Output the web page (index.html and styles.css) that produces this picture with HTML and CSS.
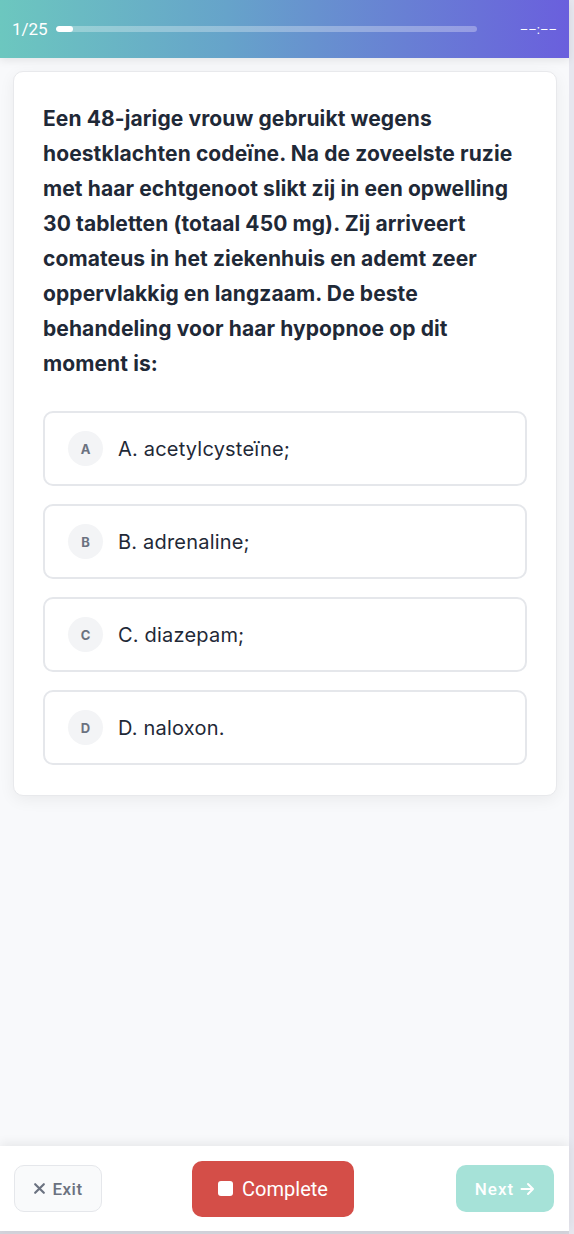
FILE: index.html
```html
<!DOCTYPE html>
<html lang="nl">
<head>
  <meta charset="UTF-8" />
  <meta name="viewport" content="width=device-width, initial-scale=1.0"/>
  <title>Quiz</title>
  <link rel="stylesheet" href="styles.css">
</head>
<body>

<div class="app">
  <header class="topbar">
    <span class="counter">1/25</span>
    <div class="progress"><div class="progress-fill" style="width: 4%"></div></div>
    <span class="timer">&ndash;&ndash;:&ndash;&ndash;</span>
  </header>

  <main class="content">
    <div class="card">
      <p class="question">Een 48-jarige vrouw gebruikt wegens hoestklachten codeïne. Na de zoveelste ruzie met haar echtgenoot slikt zij in een opwelling 30 tabletten (totaal 450 mg). Zij arriveert comateus in het ziekenhuis en ademt zeer oppervlakkig en langzaam. De beste behandeling voor haar hypopnoe op dit moment is:</p>

      <div class="options">
        <button class="option"><span class="letter">A</span><span class="option-text">A. acetylcysteïne;</span></button>
        <button class="option"><span class="letter">B</span><span class="option-text">B. adrenaline;</span></button>
        <button class="option"><span class="letter">C</span><span class="option-text">C. diazepam;</span></button>
        <button class="option"><span class="letter">D</span><span class="option-text">D. naloxon.</span></button>
      </div>
    </div>
  </main>

  <footer class="bottombar">
    <button class="btn btn-exit">
      <svg width="13" height="13" viewBox="0 0 12 12"><path d="M2 2L10 10M10 2L2 10" stroke="currentColor" stroke-width="2" stroke-linecap="round"/></svg>
      Exit
    </button>
    <button class="btn btn-complete"><span class="stop-icon"></span>Complete</button>
    <button class="btn btn-next">
      Next
      <svg width="15" height="14" viewBox="0 0 15 14"><path d="M1.5 7H13M8 2L13 7L8 12" fill="none" stroke="currentColor" stroke-width="2" stroke-linecap="round" stroke-linejoin="round"/></svg>
    </button>
  </footer>
</div>

</body>
</html>
```

FILE: styles.css
```css
body {
  margin: 0;
  background: #e6e6ee;
  font-family: Inter, 'Noto Sans', sans-serif;
}
.app {
  width: 569px;
  height: 1231px;
  background: #f8f9fb;
  display: flex;
  flex-direction: column;
  border-bottom: 3px solid #d4d4dc;
}
.topbar {
  height: 58px;
  flex-shrink: 0;
  display: flex;
  align-items: center;
  padding: 0 12px;
  background: linear-gradient(90deg, #6cc7bf 0%, #66a3ca 40%, #6a5fdd 100%);
  color: #fff;
  box-shadow: 0 3px 8px rgba(0, 0, 0, 0.08);
  position: relative;
  z-index: 1;
}
.counter {
  font-family: Roboto, sans-serif;
  font-size: 17px;
}
.progress {
  flex: 1;
  height: 6px;
  margin: 0 43px 0 8px;
  border-radius: 3px;
  background: rgba(255, 255, 255, 0.3);
  overflow: hidden;
}
.progress-fill {
  height: 100%;
  background: #fff;
  border-radius: 3px;
}
.timer {
  font-family: Roboto, sans-serif;
  font-size: 13px;
}
.content {
  flex: 1;
  padding: 13px 12px 0 13px;
}
.card {
  background: #fff;
  border: 1px solid #e8e9ec;
  border-radius: 10px;
  padding: 29px 29px 30px;
  box-shadow: 0 4px 16px rgba(0, 0, 0, 0.06);
}
.question {
  margin: 0 0 30px;
  font-size: 21px;
  font-weight: 700;
  line-height: 35px;
  letter-spacing: 0.1px;
  color: #1f2937;
}
.options {
  display: flex;
  flex-direction: column;
  gap: 18px;
}
.option {
  display: flex;
  align-items: center;
  gap: 15px;
  height: 75px;
  padding: 0 23px;
  background: #fff;
  border: 2px solid #e5e7eb;
  border-radius: 10px;
  font-family: inherit;
  text-align: left;
  cursor: pointer;
}
.letter {
  width: 35px;
  height: 35px;
  border-radius: 50%;
  background: #f3f4f6;
  color: #6b7280;
  font-size: 13px;
  font-weight: 700;
  display: flex;
  align-items: center;
  justify-content: center;
  flex-shrink: 0;
}
.option-text {
  font-size: 20px;
  letter-spacing: 0.2px;
  color: #1f2937;
}
.bottombar {
  height: 85px;
  flex-shrink: 0;
  display: flex;
  align-items: center;
  padding: 0 15px 0 14px;
  background: #fff;
  box-shadow: 0 -3px 10px rgba(0, 0, 0, 0.07);
}
.btn {
  font-family: Roboto, sans-serif;
  border-radius: 10px;
  cursor: pointer;
  display: flex;
  align-items: center;
  justify-content: center;
}
.btn-exit {
  width: 88px;
  height: 47px;
  gap: 6px;
  background: #f9fafb;
  border: 1px solid #e5e7eb;
  color: #6b7280;
  font-size: 17px;
  font-weight: 500;
  letter-spacing: 0.5px;
}
.btn-complete {
  width: 162px;
  height: 56px;
  margin-left: 90px;
  background: #d44e48;
  border: none;
  color: #fff;
  font-size: 20px;
  gap: 9px;
}
.stop-icon {
  width: 15px;
  height: 15px;
  background: #fff;
  border-radius: 3px;
}
.btn-next {
  width: 98px;
  height: 47px;
  gap: 6px;
  margin-left: auto;
  background: #a6e2d8;
  border: none;
  color: #fff;
  font-size: 17px;
  font-weight: 500;
  letter-spacing: 1px;
}
```
